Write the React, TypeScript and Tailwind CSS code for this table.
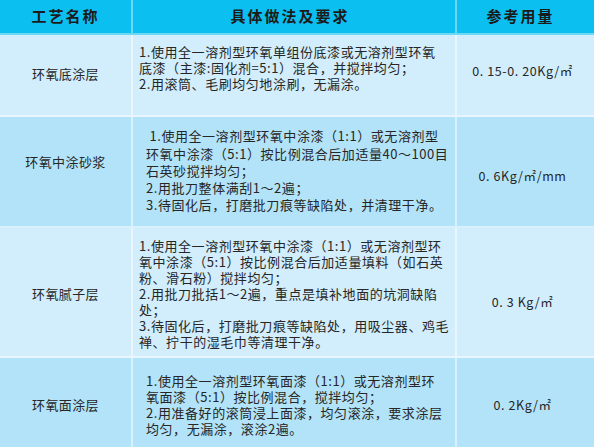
const font = { fontFamily: '"Noto Sans CJK SC", "Noto Sans", sans-serif' };

type Row = {
  name: string;
  lines: string[];
  amount: string;
  bg: string;
  h: string;
  textPad: string;
  namePad: string;
  amountPad: string;
  leading: string;
};

const rows: Row[] = [
  {
    name: "环氧底涂层",
    lines: [
      "1.使用全一溶剂型环氧单组份底漆或无溶剂型环氧",
      "底漆（主漆:固化剂=5:1）混合，并搅拌均匀；",
      "2.用滚筒、毛刷均匀地涂刷，无漏涂。",
    ],
    amount: "0. 15-0. 20Kg/㎡",
    bg: "bg-[#d2edfb]",
    h: "h-[82px]",
    textPad: "items-start pt-[9px] pl-[6px]",
    namePad: "pb-[2px]",
    amountPad: "pb-[8px]",
    leading: "leading-[16px]",
  },
  {
    name: "环氧中涂砂浆",
    lines: [
      "\u00a01.使用全一溶剂型环氧中涂漆（1:1）或无溶剂型",
      "环氧中涂漆（5:1）按比例混合后加适量40～100目",
      "石英砂搅拌均匀；",
      "2.用批刀整体满刮1～2遍；",
      "3.待固化后，打磨批刀痕等缺陷处，并清理干净。",
    ],
    amount: "0. 6Kg/㎡/mm",
    bg: "bg-[#b3e3f8]",
    h: "h-[111px]",
    textPad: "items-center pl-[13px] pb-[2px]",
    namePad: "pb-[19px]",
    amountPad: "pt-[9px]",
    leading: "leading-[17.3px]",
  },
  {
    name: "环氧腻子层",
    lines: [
      "1.使用全一溶剂型环氧中涂漆（1:1）或无溶剂型环",
      "氧中涂漆（5:1）按比例混合后加适量填料（如石英",
      "粉、滑石粉）搅拌均匀；",
      "2.用批刀批括1～2遍，重点是填补地面的坑洞缺陷",
      "处；",
      "3.待固化后，打磨批刀痕等缺陷处，用吸尘器、鸡毛",
      "禅、拧干的湿毛巾等清理干净。",
    ],
    amount: "0. 3 Kg/㎡",
    bg: "bg-[#d2edfb]",
    h: "h-[130px]",
    textPad: "items-center pl-[6px] pt-[4px]",
    namePad: "pt-[4px]",
    amountPad: "pt-[20px]",
    leading: "leading-[16px]",
  },
  {
    name: "环氧面涂层",
    lines: [
      "1.使用全一溶剂型环氧面漆（1:1）或无溶剂型环",
      "氧面漆（5:1）按比例混合，搅拌均匀；",
      "2.用准备好的滚筒浸上面漆，均匀滚涂，要求涂层",
      "均匀，无漏涂，滚涂2遍。",
    ],
    amount: "0. 2Kg/㎡",
    bg: "bg-[#b3e3f8]",
    h: "h-[89px]",
    textPad: "items-start pl-[13px] pt-[15px]",
    namePad: "pt-[4px]",
    amountPad: "pt-[5px]",
    leading: "leading-[16px]",
  },
];

export default function App() {
  return (
    <div className="w-[594px] h-[447px] overflow-hidden bg-white" style={font}>
      {/* Header */}
      <div className="grid grid-cols-[133px_324px_137px] h-[35px] bg-[#0bbff1] border-b-2 border-white/40 text-[#1b1b1b] font-bold text-[15px] tracking-[2px]">
        <div className="flex items-center justify-center border-r-2 border-white/40 pb-[1px]">工艺名称</div>
        <div className="flex items-center justify-center border-r-2 border-white/40 pb-[1px] pr-[8px]">具体做法及要求</div>
        <div className="flex items-center justify-center pb-[1px] pr-[10px]">参考用量</div>
      </div>

      {rows.map((r, i) => (
        <div
          key={r.name}
          className={`grid grid-cols-[133px_324px_137px] ${r.h} ${r.bg} ${
            i < rows.length - 1 ? "border-b-2 border-white/50" : ""
          } text-[#262626]`}
        >
          <div className={`flex items-center justify-center border-r-2 border-white/50 text-[13px] tracking-[0.4px] ${r.namePad}`}>
            {r.name}
          </div>
          <div className={`flex border-r-2 border-white/50 ${r.textPad}`}>
            <div className={`text-[13px] tracking-[0.55px] whitespace-pre ${r.leading}`}>
              {r.lines.map((l) => (
                <div key={l}>{l}</div>
              ))}
            </div>
          </div>
          <div className={`flex items-center justify-center text-[12.5px] tracking-[0.6px] pr-[6px] ${r.amountPad}`}>
            {r.amount}
          </div>
        </div>
      ))}
    </div>
  );
}
